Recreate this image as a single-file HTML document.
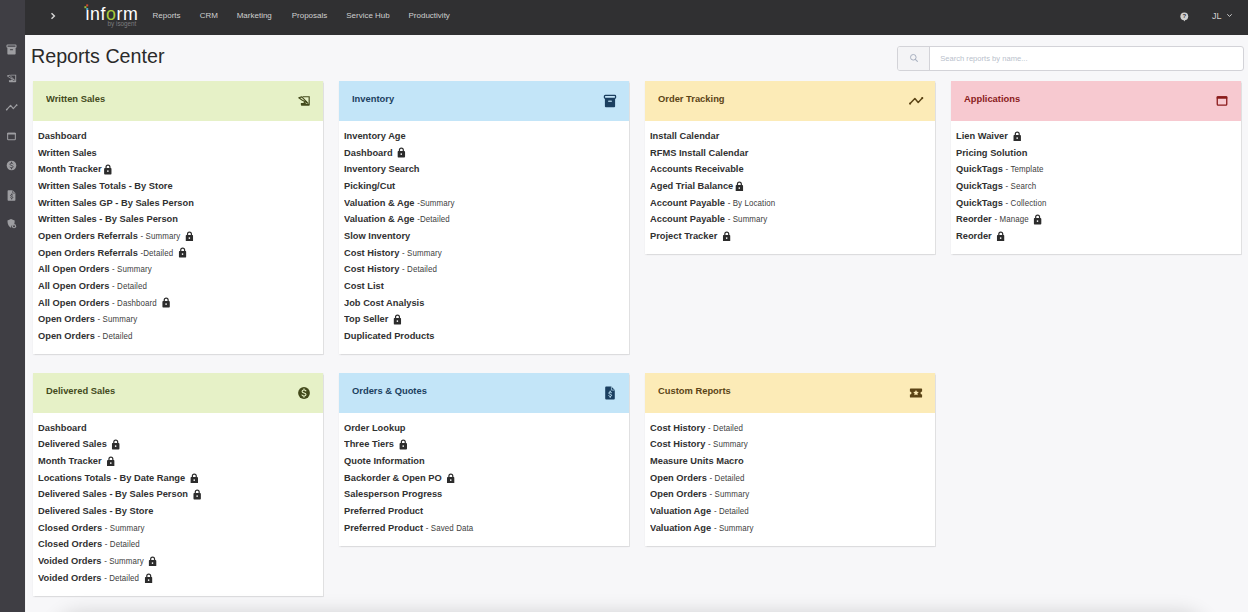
<!DOCTYPE html>
<html><head><meta charset="utf-8">
<style>
*{box-sizing:border-box;margin:0;padding:0}
html,body{width:1248px;height:612px;overflow:hidden}
body{background:#f7f7f9;font-family:"Liberation Sans",sans-serif;position:relative;color:#2b2b2b}
#side{position:absolute;left:0;top:0;width:25px;height:612px;background:#3f3e44;z-index:2}
#side .ic{position:absolute;left:5.1px;width:13px;height:13px;line-height:0}
#sedge{position:absolute;left:25px;top:35px;width:2px;height:577px;background:linear-gradient(90deg,#e9e9ec,#fbfbfc 50%,#f9f9fa)}
#top{position:absolute;left:25px;top:0;width:1223px;height:35px;background:#303032;z-index:2}
#chev{position:absolute;left:25px;top:12px}
#logo{position:absolute;left:59px;top:0}
#nav{position:absolute;left:0;top:0;height:35px}
#nav span{position:absolute;top:0;white-space:nowrap;font-size:8px;line-height:32px;color:#cfcfcf}
#help{position:absolute;left:1154.5px;top:11.6px}
#user{position:absolute;left:1187px;top:0;font-size:9px;line-height:33px;color:#d0d0d0}
#uchev{position:absolute;left:1201px;top:13px}
#title{position:absolute;left:31px;top:42.3px;font-size:19.7px;line-height:28px;color:#2a2a2a;white-space:nowrap}
#search{position:absolute;left:896.6px;top:46px;width:347.4px;height:24.5px;border:1px solid #d3d3d8;border-radius:3px;background:#fff;overflow:hidden}
#search .add{position:absolute;left:0;top:0;width:32px;height:100%;background:#f4f4f6;border-right:1px solid #d3d3d8}
#search .add svg{position:absolute;left:11px;top:6px}
#search .ph{position:absolute;left:42.6px;top:0;line-height:24.5px;font-size:7.6px;color:#b9bfcc;white-space:nowrap}
.card{position:absolute;width:290.4px;background:#fff;box-shadow:0 0 1px 0.5px rgba(0,0,0,.08),0 1px 2px rgba(0,0,0,.05)}
.hd{height:40px;position:relative}
.hd h3{position:absolute;left:12.9px;top:0;line-height:36.6px;font-size:9.8px;font-weight:bold;letter-spacing:0px;white-space:nowrap;transform:scaleX(.955);transform-origin:0 0}
.hd .hi{position:absolute;right:11.3px;top:12.25px;width:16px;height:16px;line-height:0}
.bd{padding:7.0px 6px 9.9px 5.4px}
.it{height:16.67px;line-height:16.67px;font-size:9.6px;font-weight:bold;letter-spacing:0px;white-space:nowrap;color:#313131;transform:scaleX(.97);transform-origin:0 0}
.it small{font-size:8.2px;font-weight:normal;letter-spacing:0.1px;color:#404040;margin-left:0.4px}
.g{background:#e6f1c7;color:#434a1c}
.b{background:#c3e5f8;color:#1b3f60}
.y{background:#fcebb7;color:#5b4416}
.p{background:#f7c9d0;color:#8a1b1b}
.lk{display:inline-block;width:8.3px;height:10.5px;vertical-align:-2.3px;margin-left:5.3px}
.lk.n{margin-left:2.6px}
#shadow{position:absolute;left:60px;top:618px;width:1142px;height:40px;box-shadow:0 0 20px 5px rgba(0,0,0,.16);border-radius:40px;background:#ccc}
</style></head><body>
<div id="side"><div class="ic" style="top:42.5px"><svg width="13" height="13" viewBox="0 0 16 16"><rect x="2.45" y="2.45" width="11.1" height="2.9" rx="0.8" fill="none" stroke="#9d9da1" stroke-width="1.3"/><path d="M2.9 5.7H13.1V13.3a.9.9 0 0 1-.9.9H3.8a.9.9 0 0 1-.9-.9z" fill="#9d9da1"/><rect x="6.1" y="7.5" width="3.8" height="1.5" rx=".5" fill="#3f3e44" opacity=".8"/></svg></div><div class="ic" style="top:71.5px"><svg width="13" height="13" viewBox="0 0 16 16"><g transform="translate(8 8) scale(.9) translate(-7.1 -7.25)"><path d="M5.6 2h7.9v9.5a1 1 0 0 1-1 1H4.6a1 1 0 0 1-1-1V9.6h2.6l1.5-1.4 1.8 2H12.2V3.2H5.6z" fill="#9d9da1"/><path d="M1.3 3.7L4.6 2.7 11.4 9.7 4.8 6.1z" fill="none" stroke="#9d9da1" stroke-width="1.25" stroke-linejoin="round"/></g></svg></div><div class="ic" style="top:101.0px"><svg width="13" height="13" viewBox="0 0 16 16"><path d="M2.1 10.6L6.9 5.5 10.2 9.5 14.3 5.1" fill="none" stroke="#9d9da1" stroke-width="1.45" stroke-linejoin="round" stroke-linecap="round"/><circle cx="2.1" cy="10.6" r="1.05" fill="#9d9da1"/><circle cx="14.3" cy="5.1" r="1.05" fill="#9d9da1"/></svg></div><div class="ic" style="top:130.0px"><svg width="13" height="13" viewBox="0 0 16 16"><rect x="3.25" y="4" width="9.5" height="8.1" rx="0.9" fill="none" stroke="#9d9da1" stroke-width="1.3"/><rect x="2.6" y="3.35" width="10.8" height="2.3" rx=".6" fill="#9d9da1"/></svg></div><div class="ic" style="top:159.2px"><svg width="13" height="13" viewBox="0 0 16 16"><circle cx="8" cy="8" r="5.9" fill="#9d9da1"/><path d="M9.9 5.9c-.4-.6-1.1-.9-1.9-.9-1.1 0-1.9.6-1.9 1.5 0 1.9 3.9 1.1 3.9 3 0 .9-.9 1.5-2 1.5-.9 0-1.6-.4-2-1M8 3.9v1.1M8 11v1.1" fill="none" stroke="#3f3e44" stroke-width="1.1" stroke-linecap="round"/></svg></div><div class="ic" style="top:188.5px"><svg width="13" height="13" viewBox="0 0 16 16"><path d="M4.1 1.5h5.2l3.5 3.5v8.6a.9.9 0 0 1-.9.9H4.1a.9.9 0 0 1-.9-.9V2.4a.9.9 0 0 1 .9-.9z" fill="#9d9da1"/><path d="M9.4 1.7v3.4h3.3" fill="none" stroke="#3f3e44" stroke-width=".7"/><path d="M9.5 7.6c-.3-.4-.8-.6-1.3-.6-.8 0-1.4.4-1.4 1.1 0 1.4 2.8.8 2.8 2.2 0 .7-.6 1.1-1.4 1.1-.6 0-1.1-.3-1.4-.7M8.2 6.1v.9M8.2 11.5v.9" fill="none" stroke="#3f3e44" stroke-width="1" stroke-linecap="round"/></svg></div><div class="ic" style="top:217.2px"><svg width="13" height="13" viewBox="0 0 16 16"><path d="M7.4 2.6l4.5 1.8c0 2-.1 3.6-.8 5.1A3 3 0 0 0 7.6 13.4C4.7 12.1 3 9.6 3 4.4z" fill="#9d9da1"/><circle cx="11.1" cy="11.3" r="2.6" fill="#9d9da1"/><circle cx="11.1" cy="11.3" r="1.2" fill="#3f3e44"/></svg></div></div><div id="sedge"></div>
<div id="top">
 <svg id="chev" width="6" height="8" viewBox="0 0 6 8"><path d="M1.5 1.2L4.4 4 1.5 6.8" fill="none" stroke="#d8d8d8" stroke-width="1.4"/></svg>
 <svg id="logo" width="66" height="30" viewBox="0 0 66 30">
  <text x="1.4" y="19.9" font-family="Liberation Sans" font-size="17.8" fill="#fff" letter-spacing="0.6">inf<tspan fill="#a9c83c">o</tspan>rm</text>
  <text x="23.6" y="26.2" font-family="Liberation Sans" font-size="6.3" fill="#7c7c7e">by isogent</text>
  <rect x="1.6" y="5.6" width="3.4" height="3.4" fill="#303032"/>
  <rect x="2.2" y="8" width="2" height="2" fill="#4aa7c4"/>
  <rect x="2.2" y="4.4" width="2" height="2" fill="#d9482c"/>
  <rect x="0.4" y="6.2" width="2" height="2" fill="#9cbd3a"/>
 </svg>
 <div id="nav"><span style="left:127.5px">Reports</span><span style="left:174.7px">CRM</span><span style="left:211.7px">Marketing</span><span style="left:266.7px">Proposals</span><span style="left:321.2px">Service Hub</span><span style="left:383.5px">Productivity</span></div>
 <svg id="help" width="9" height="10" viewBox="0 0 9 10"><circle cx="4.3" cy="4.3" r="3.9" fill="#cfcfcf"/><path d="M3.4 7.6l1 1.8 1-1.8z" fill="#cfcfcf"/><text x="4.3" y="6.4" text-anchor="middle" font-family="Liberation Sans" font-weight="bold" font-size="6" fill="#303032">?</text></svg>
 <div id="user">JL</div>
 <svg id="uchev" width="7" height="5" viewBox="0 0 7 5"><path d="M1.3 1.3L3.5 3.4 5.7 1.3" fill="none" stroke="#cfcfcf" stroke-width="1"/></svg>
</div>
<div id="title">Reports Center</div>
<div id="search"><div class="add"><svg width="10" height="10" viewBox="0 0 10 10"><circle cx="4.3" cy="4.3" r="2.8" fill="none" stroke="#a9b1c1" stroke-width="1"/><path d="M6.3 6.3L8.4 8.4" stroke="#a9b1c1" stroke-width="1.1" stroke-linecap="round"/></svg></div><div class="ph">Search reports by name...</div></div>
<div class="card" style="left:32.75px;top:81.0px"><div class="hd g"><h3>Written Sales</h3><div class="hi"><svg width="16" height="16" viewBox="0 0 16 16"><g transform="translate(8 8) scale(.9) translate(-7.1 -7.25)"><path d="M5.6 2h7.9v9.5a1 1 0 0 1-1 1H4.6a1 1 0 0 1-1-1V9.6h2.6l1.5-1.4 1.8 2H12.2V3.2H5.6z" fill="#434a1c"/><path d="M1.3 3.7L4.6 2.7 11.4 9.7 4.8 6.1z" fill="none" stroke="#434a1c" stroke-width="1.25" stroke-linejoin="round"/></g></svg></div></div><div class="bd"><div class="it">Dashboard</div><div class="it">Written Sales</div><div class="it">Month Tracker<svg class="lk n" viewBox="0 0 8 10.5"><path d="M2 4.5V3a2 2 0 0 1 4 0v1.5" fill="none" stroke="#2c2c2c" stroke-width="1.25"/><rect x="0" y="4" width="7.8" height="6.5" rx="0.9" fill="#2c2c2c"/><circle cx="3.9" cy="7.1" r="0.85" fill="#fff"/></svg></div><div class="it">Written Sales Totals - By Store</div><div class="it">Written Sales GP - By Sales Person</div><div class="it">Written Sales - By Sales Person</div><div class="it">Open Orders Referrals<small> - Summary</small><svg class="lk" viewBox="0 0 8 10.5"><path d="M2 4.5V3a2 2 0 0 1 4 0v1.5" fill="none" stroke="#2c2c2c" stroke-width="1.25"/><rect x="0" y="4" width="7.8" height="6.5" rx="0.9" fill="#2c2c2c"/><circle cx="3.9" cy="7.1" r="0.85" fill="#fff"/></svg></div><div class="it">Open Orders Referrals<small> -Detailed</small><svg class="lk" viewBox="0 0 8 10.5"><path d="M2 4.5V3a2 2 0 0 1 4 0v1.5" fill="none" stroke="#2c2c2c" stroke-width="1.25"/><rect x="0" y="4" width="7.8" height="6.5" rx="0.9" fill="#2c2c2c"/><circle cx="3.9" cy="7.1" r="0.85" fill="#fff"/></svg></div><div class="it">All Open Orders<small> - Summary</small></div><div class="it">All Open Orders<small> - Detailed</small></div><div class="it">All Open Orders<small> - Dashboard</small><svg class="lk" viewBox="0 0 8 10.5"><path d="M2 4.5V3a2 2 0 0 1 4 0v1.5" fill="none" stroke="#2c2c2c" stroke-width="1.25"/><rect x="0" y="4" width="7.8" height="6.5" rx="0.9" fill="#2c2c2c"/><circle cx="3.9" cy="7.1" r="0.85" fill="#fff"/></svg></div><div class="it">Open Orders<small> - Summary</small></div><div class="it">Open Orders<small> - Detailed</small></div></div></div>
<div class="card" style="left:338.75px;top:81.0px"><div class="hd b"><h3>Inventory</h3><div class="hi"><svg width="16" height="16" viewBox="0 0 16 16"><rect x="2.45" y="2.45" width="11.1" height="2.9" rx="0.8" fill="none" stroke="#1b3f60" stroke-width="1.3"/><path d="M2.9 5.7H13.1V13.3a.9.9 0 0 1-.9.9H3.8a.9.9 0 0 1-.9-.9z" fill="#1b3f60"/><rect x="6.1" y="7.5" width="3.8" height="1.5" rx=".5" fill="#c3e5f8" opacity=".8"/></svg></div></div><div class="bd"><div class="it">Inventory Age</div><div class="it">Dashboard<svg class="lk" viewBox="0 0 8 10.5"><path d="M2 4.5V3a2 2 0 0 1 4 0v1.5" fill="none" stroke="#2c2c2c" stroke-width="1.25"/><rect x="0" y="4" width="7.8" height="6.5" rx="0.9" fill="#2c2c2c"/><circle cx="3.9" cy="7.1" r="0.85" fill="#fff"/></svg></div><div class="it">Inventory Search</div><div class="it">Picking/Cut</div><div class="it">Valuation &amp; Age<small> -Summary</small></div><div class="it">Valuation &amp; Age<small> -Detailed</small></div><div class="it">Slow Inventory</div><div class="it">Cost History<small> - Summary</small></div><div class="it">Cost History<small> - Detailed</small></div><div class="it">Cost List</div><div class="it">Job Cost Analysis</div><div class="it">Top Seller<svg class="lk" viewBox="0 0 8 10.5"><path d="M2 4.5V3a2 2 0 0 1 4 0v1.5" fill="none" stroke="#2c2c2c" stroke-width="1.25"/><rect x="0" y="4" width="7.8" height="6.5" rx="0.9" fill="#2c2c2c"/><circle cx="3.9" cy="7.1" r="0.85" fill="#fff"/></svg></div><div class="it">Duplicated Products</div></div></div>
<div class="card" style="left:644.75px;top:81.0px"><div class="hd y"><h3>Order Tracking</h3><div class="hi"><svg width="16" height="16" viewBox="0 0 16 16"><path d="M2.1 10.6L6.9 5.5 10.2 9.5 14.3 5.1" fill="none" stroke="#5b4416" stroke-width="1.45" stroke-linejoin="round" stroke-linecap="round"/><circle cx="2.1" cy="10.6" r="1.05" fill="#5b4416"/><circle cx="14.3" cy="5.1" r="1.05" fill="#5b4416"/></svg></div></div><div class="bd"><div class="it">Install Calendar</div><div class="it">RFMS Install Calendar</div><div class="it">Accounts Receivable</div><div class="it">Aged Trial Balance<svg class="lk n" viewBox="0 0 8 10.5"><path d="M2 4.5V3a2 2 0 0 1 4 0v1.5" fill="none" stroke="#2c2c2c" stroke-width="1.25"/><rect x="0" y="4" width="7.8" height="6.5" rx="0.9" fill="#2c2c2c"/><circle cx="3.9" cy="7.1" r="0.85" fill="#fff"/></svg></div><div class="it">Account Payable<small> - By Location</small></div><div class="it">Account Payable<small> - Summary</small></div><div class="it">Project Tracker<svg class="lk" viewBox="0 0 8 10.5"><path d="M2 4.5V3a2 2 0 0 1 4 0v1.5" fill="none" stroke="#2c2c2c" stroke-width="1.25"/><rect x="0" y="4" width="7.8" height="6.5" rx="0.9" fill="#2c2c2c"/><circle cx="3.9" cy="7.1" r="0.85" fill="#fff"/></svg></div></div></div>
<div class="card" style="left:950.75px;top:81.0px"><div class="hd p"><h3>Applications</h3><div class="hi"><svg width="16" height="16" viewBox="0 0 16 16"><rect x="3.25" y="4" width="9.5" height="8.1" rx="0.9" fill="none" stroke="#8a1b1b" stroke-width="1.3"/><rect x="2.6" y="3.35" width="10.8" height="2.3" rx=".6" fill="#8a1b1b"/></svg></div></div><div class="bd"><div class="it">Lien Waiver<svg class="lk" viewBox="0 0 8 10.5"><path d="M2 4.5V3a2 2 0 0 1 4 0v1.5" fill="none" stroke="#2c2c2c" stroke-width="1.25"/><rect x="0" y="4" width="7.8" height="6.5" rx="0.9" fill="#2c2c2c"/><circle cx="3.9" cy="7.1" r="0.85" fill="#fff"/></svg></div><div class="it">Pricing Solution</div><div class="it">QuickTags<small> - Template</small></div><div class="it">QuickTags<small> - Search</small></div><div class="it">QuickTags<small> - Collection</small></div><div class="it">Reorder<small> - Manage</small><svg class="lk" viewBox="0 0 8 10.5"><path d="M2 4.5V3a2 2 0 0 1 4 0v1.5" fill="none" stroke="#2c2c2c" stroke-width="1.25"/><rect x="0" y="4" width="7.8" height="6.5" rx="0.9" fill="#2c2c2c"/><circle cx="3.9" cy="7.1" r="0.85" fill="#fff"/></svg></div><div class="it">Reorder<svg class="lk" viewBox="0 0 8 10.5"><path d="M2 4.5V3a2 2 0 0 1 4 0v1.5" fill="none" stroke="#2c2c2c" stroke-width="1.25"/><rect x="0" y="4" width="7.8" height="6.5" rx="0.9" fill="#2c2c2c"/><circle cx="3.9" cy="7.1" r="0.85" fill="#fff"/></svg></div></div></div>
<div class="card" style="left:32.75px;top:372.8px"><div class="hd g"><h3>Delivered Sales</h3><div class="hi"><svg width="16" height="16" viewBox="0 0 16 16"><circle cx="8" cy="8" r="5.9" fill="#434a1c"/><path d="M9.9 5.9c-.4-.6-1.1-.9-1.9-.9-1.1 0-1.9.6-1.9 1.5 0 1.9 3.9 1.1 3.9 3 0 .9-.9 1.5-2 1.5-.9 0-1.6-.4-2-1M8 3.9v1.1M8 11v1.1" fill="none" stroke="#e6f1c7" stroke-width="1.1" stroke-linecap="round"/></svg></div></div><div class="bd"><div class="it">Dashboard</div><div class="it">Delivered Sales<svg class="lk" viewBox="0 0 8 10.5"><path d="M2 4.5V3a2 2 0 0 1 4 0v1.5" fill="none" stroke="#2c2c2c" stroke-width="1.25"/><rect x="0" y="4" width="7.8" height="6.5" rx="0.9" fill="#2c2c2c"/><circle cx="3.9" cy="7.1" r="0.85" fill="#fff"/></svg></div><div class="it">Month Tracker<svg class="lk" viewBox="0 0 8 10.5"><path d="M2 4.5V3a2 2 0 0 1 4 0v1.5" fill="none" stroke="#2c2c2c" stroke-width="1.25"/><rect x="0" y="4" width="7.8" height="6.5" rx="0.9" fill="#2c2c2c"/><circle cx="3.9" cy="7.1" r="0.85" fill="#fff"/></svg></div><div class="it">Locations Totals - By Date Range<svg class="lk" viewBox="0 0 8 10.5"><path d="M2 4.5V3a2 2 0 0 1 4 0v1.5" fill="none" stroke="#2c2c2c" stroke-width="1.25"/><rect x="0" y="4" width="7.8" height="6.5" rx="0.9" fill="#2c2c2c"/><circle cx="3.9" cy="7.1" r="0.85" fill="#fff"/></svg></div><div class="it">Delivered Sales - By Sales Person<svg class="lk" viewBox="0 0 8 10.5"><path d="M2 4.5V3a2 2 0 0 1 4 0v1.5" fill="none" stroke="#2c2c2c" stroke-width="1.25"/><rect x="0" y="4" width="7.8" height="6.5" rx="0.9" fill="#2c2c2c"/><circle cx="3.9" cy="7.1" r="0.85" fill="#fff"/></svg></div><div class="it">Delivered Sales - By Store</div><div class="it">Closed Orders<small> - Summary</small></div><div class="it">Closed Orders<small> - Detailed</small></div><div class="it">Voided Orders<small> - Summary</small><svg class="lk" viewBox="0 0 8 10.5"><path d="M2 4.5V3a2 2 0 0 1 4 0v1.5" fill="none" stroke="#2c2c2c" stroke-width="1.25"/><rect x="0" y="4" width="7.8" height="6.5" rx="0.9" fill="#2c2c2c"/><circle cx="3.9" cy="7.1" r="0.85" fill="#fff"/></svg></div><div class="it">Voided Orders<small> - Detailed</small><svg class="lk" viewBox="0 0 8 10.5"><path d="M2 4.5V3a2 2 0 0 1 4 0v1.5" fill="none" stroke="#2c2c2c" stroke-width="1.25"/><rect x="0" y="4" width="7.8" height="6.5" rx="0.9" fill="#2c2c2c"/><circle cx="3.9" cy="7.1" r="0.85" fill="#fff"/></svg></div></div></div>
<div class="card" style="left:338.75px;top:372.8px"><div class="hd b"><h3>Orders &amp; Quotes</h3><div class="hi"><svg width="16" height="16" viewBox="0 0 16 16"><path d="M4.1 1.5h5.2l3.5 3.5v8.6a.9.9 0 0 1-.9.9H4.1a.9.9 0 0 1-.9-.9V2.4a.9.9 0 0 1 .9-.9z" fill="#1b3f60"/><path d="M9.4 1.7v3.4h3.3" fill="none" stroke="#c3e5f8" stroke-width=".7"/><path d="M9.5 7.6c-.3-.4-.8-.6-1.3-.6-.8 0-1.4.4-1.4 1.1 0 1.4 2.8.8 2.8 2.2 0 .7-.6 1.1-1.4 1.1-.6 0-1.1-.3-1.4-.7M8.2 6.1v.9M8.2 11.5v.9" fill="none" stroke="#c3e5f8" stroke-width="1" stroke-linecap="round"/></svg></div></div><div class="bd"><div class="it">Order Lookup</div><div class="it">Three Tiers<svg class="lk" viewBox="0 0 8 10.5"><path d="M2 4.5V3a2 2 0 0 1 4 0v1.5" fill="none" stroke="#2c2c2c" stroke-width="1.25"/><rect x="0" y="4" width="7.8" height="6.5" rx="0.9" fill="#2c2c2c"/><circle cx="3.9" cy="7.1" r="0.85" fill="#fff"/></svg></div><div class="it">Quote Information</div><div class="it">Backorder &amp; Open PO<svg class="lk" viewBox="0 0 8 10.5"><path d="M2 4.5V3a2 2 0 0 1 4 0v1.5" fill="none" stroke="#2c2c2c" stroke-width="1.25"/><rect x="0" y="4" width="7.8" height="6.5" rx="0.9" fill="#2c2c2c"/><circle cx="3.9" cy="7.1" r="0.85" fill="#fff"/></svg></div><div class="it">Salesperson Progress</div><div class="it">Preferred Product</div><div class="it">Preferred Product<small> - Saved Data</small></div></div></div>
<div class="card" style="left:644.75px;top:372.8px"><div class="hd y"><h3>Custom Reports</h3><div class="hi"><svg width="16" height="16" viewBox="0 0 16 16"><path d="M2.6 3.4h10.8a.7.7 0 0 1 .7.7v2.3a1.6 1.6 0 0 0 0 3.2v2.3a.7.7 0 0 1-.7.7H2.6a.7.7 0 0 1-.7-.7V9.6a1.6 1.6 0 0 0 0-3.2V4.1a.7.7 0 0 1 .7-.7z" fill="#5b4416"/><path d="M8 5.1l.85 1.75 1.9.25-1.4 1.3.35 1.9L8 9.4l-1.7.9.35-1.9-1.4-1.3 1.9-.25z" fill="#fcebb7"/></svg></div></div><div class="bd"><div class="it">Cost History<small> - Detailed</small></div><div class="it">Cost History<small> - Summary</small></div><div class="it">Measure Units Macro</div><div class="it">Open Orders<small> - Detailed</small></div><div class="it">Open Orders<small> - Summary</small></div><div class="it">Valuation Age<small> - Detailed</small></div><div class="it">Valuation Age<small> - Summary</small></div></div></div>
<div id="shadow"></div>
</body></html>
